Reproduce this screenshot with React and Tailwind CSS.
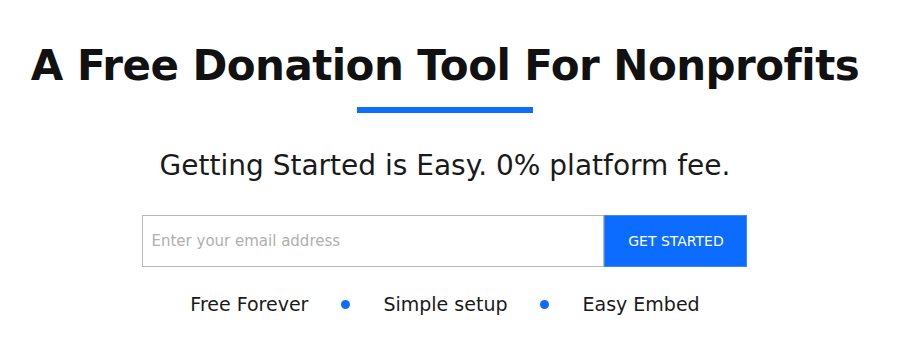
import { useState } from 'react'

const FEATURES = ['Free Forever', 'Simple setup', 'Easy Embed']

// Hero block for the donation tool signup
function App() {
  const [email, setEmail] = useState('')

  return (
    <div className="w-full h-[340px] bg-white flex flex-col items-center font-['DejaVu_Sans',sans-serif] text-[#111]">
      <div className="flex flex-col items-center mr-[10px]">
        <h1 className="mt-[39px] text-[42px] leading-[54px] font-bold tracking-[-0.55px] whitespace-nowrap">
          A Free Donation Tool For Nonprofits
        </h1>
        <div className="mt-[14px] w-[176px] h-[6px] bg-[#0d6efd]" />

        <h2 className="mt-[36px] text-[28px] leading-[34px] font-normal text-[#1a1a1a] whitespace-nowrap">
          Getting Started is Easy. 0% platform fee.
        </h2>

        <form className="mt-[32px] flex" onSubmit={(e) => e.preventDefault()}>
          <input
            type="email"
            value={email}
            onChange={(e) => setEmail(e.target.value)}
            placeholder="Enter your email address"
            className="w-[462px] h-[52px] border border-[#b8b8b8] px-[8px] text-[15px] text-[#333] placeholder:text-[#b0b0b0] outline-none"
          />
          <button
            type="submit"
            className="w-[143px] h-[52px] bg-[#0b6cff] border border-[#3d87ff] text-white text-[14px] font-medium"
          >
            GET STARTED
          </button>
        </form>

        <ul className="mt-[25px] flex items-center text-[19px] leading-[24px] text-[#1a1a1a]">
          {FEATURES.map((f, i) => (
            <li key={f} className="flex items-center">
              {i > 0 && <span className="mx-[33px] w-[9px] h-[9px] rounded-full bg-[#0b6cff]" />}
              <span>{f}</span>
            </li>
          ))}
        </ul>
      </div>
    </div>
  )
}

export default App
